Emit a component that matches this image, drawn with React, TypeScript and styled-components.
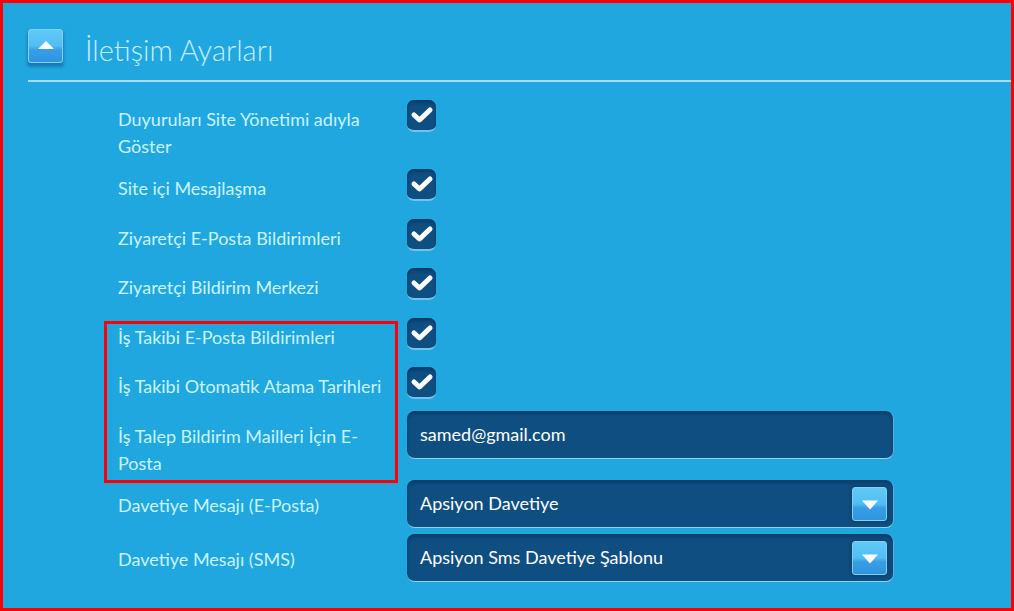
import styled, { createGlobalStyle } from 'styled-components'

const GlobalStyle = createGlobalStyle`
  html, body {
    margin: 0;
    padding: 0;
    background: #21a7e0;
  }
`;

const Frame = styled.div`
  position: relative;
  box-sizing: border-box;
  width: 1014px;
  height: 611px;
  border: 3px solid #ff0000;
  background: #21a7e0;
  overflow: hidden;
  font-family: Lato, "Open Sans", "Liberation Sans", sans-serif;
`;

const Header = styled.div`
  display: flex;
  align-items: center;
  height: 79px;
  margin-left: 25px;
  box-sizing: border-box;
  border-bottom: 2px solid #a8dcf3;
`;

const Title = styled.h1`
  margin: 0 0 0 22px;
  padding-top: 15px;
  font-size: 29px;
  font-weight: 300;
  color: #c4eefc;
`;

const ToggleButton = styled.div`
  position: relative;
  width: 35px;
  height: 34px;
  margin-top: 8px;
  box-sizing: border-box;
  border-radius: 3px;
  border: 1px solid #80d2f5;
  background: linear-gradient(#5fcaf7 0%, #52bdf2 50%, #379ee6 62%, #2f94e0 100%);
  box-shadow: 0 3px 3px 1px rgba(14, 90, 150, 0.55);
`;

const Triangle = styled.span<{ $down?: boolean }>`
  position: absolute;
  left: 50%;
  top: 50%;
  transform: translate(-50%, -50%);
  width: 0;
  height: 0;
  border-left: 8.5px solid transparent;
  border-right: 8.5px solid transparent;
  ${(p) =>
    p.$down
      ? 'border-top: 9px solid #fff; margin-top: 1px;'
      : 'border-bottom: 8px solid #fff; margin-top: -1px;'}
`;

const Form = styled.div`
  padding: 18px 0 0 115px;
`;

const Row = styled.div<{ $after: number }>`
  display: grid;
  grid-template-columns: 289px 487px;
  margin-bottom: ${(p) => p.$after}px;
`;

const Label = styled.div<{ $offset: number }>`
  padding-top: ${(p) => p.$offset}px;
  width: 280px;
  font-size: 18px;
  line-height: 27px;
  color: #c8f4ff;
  white-space: pre-line;
`;

const CheckBox = styled.div`
  display: flex;
  align-items: center;
  justify-content: center;
  width: 29px;
  height: 32px;
  box-sizing: border-box;
  border-radius: 7px;
  background: #0f4e80;
  border-bottom: 2px solid #76c3ea;
  box-shadow: inset 0 3px 3px rgba(8, 50, 90, 0.6);
`;

const Field = styled.div`
  display: flex;
  align-items: center;
  justify-content: space-between;
  box-sizing: border-box;
  height: 48px;
  padding: 0 6px 0 13px;
  border-radius: 8px;
  background: #0f4e80;
  border-bottom: 1px solid #8fd3f3;
  border-right: 1px solid #5fb0dc;
  box-shadow: inset 0 3px 3px rgba(8, 50, 90, 0.55);
  font-size: 18px;
  color: #ffffff;
`;

const FieldText = styled.span`
  margin-top: -2px;
`;

const DropButton = styled(ToggleButton)`
  margin-top: 0;
  box-shadow: 0 0 3px 1px rgba(8, 50, 90, 0.5);
`;

const Annotation = styled.div`
  position: absolute;
  left: 101px;
  top: 318px;
  width: 294px;
  height: 162px;
  box-sizing: border-box;
  border: 3px solid #ff0000;
`;

const Check = () => (
  <svg width="24" height="20" viewBox="0 0 24 20">
    <path d="M4 10 L9.5 15 L20 5" fill="none" stroke="#fff" strokeWidth="5" strokeLinecap="round" strokeLinejoin="round" />
  </svg>
);

type RowData = {
  label: string;
  after: number;
  text?: string;
  select?: boolean;
};

const rows: RowData[] = [
  { label: 'Duyuruları Site Yönetimi adıyla\nGöster', after: 9 },
  { label: 'Site içi Mesajlaşma', after: 17 },
  { label: 'Ziyaretçi E-Posta Bildirimleri', after: 16 },
  { label: 'Ziyaretçi Bildirim Merkezi', after: 17 },
  { label: 'İş Takibi E-Posta Bildirimleri', after: 16 },
  { label: 'İş Takibi Otomatik Atama Tarihleri', after: 11 },
  { label: 'İş Talep Bildirim Mailleri İçin E-\nPosta', after: 3, text: 'samed@gmail.com' },
  { label: 'Davetiye Mesajı (E-Posta)', after: 6, text: 'Apsiyon Davetiye', select: true },
  { label: 'Davetiye Mesajı (SMS)', after: 0, text: 'Apsiyon Sms Davetiye Şablonu', select: true },
];

const App = () => {
  return (
    <Frame>
      <GlobalStyle />
      <Header>
        <ToggleButton>
          <Triangle />
        </ToggleButton>
        <Title>İletişim Ayarları</Title>
      </Header>
      <Form>
        {rows.map((row) => (
          <Row key={row.label} $after={row.after}>
            <Label $offset={row.text ? 12 : 6}>{row.label}</Label>
            {row.text ? (
              <Field>
                <FieldText>{row.text}</FieldText>
                {row.select && (
                  <DropButton>
                    <Triangle $down />
                  </DropButton>
                )}
              </Field>
            ) : (
              <CheckBox>
                <Check />
              </CheckBox>
            )}
          </Row>
        ))}
      </Form>
      <Annotation />
    </Frame>
  );
};

export default App;
